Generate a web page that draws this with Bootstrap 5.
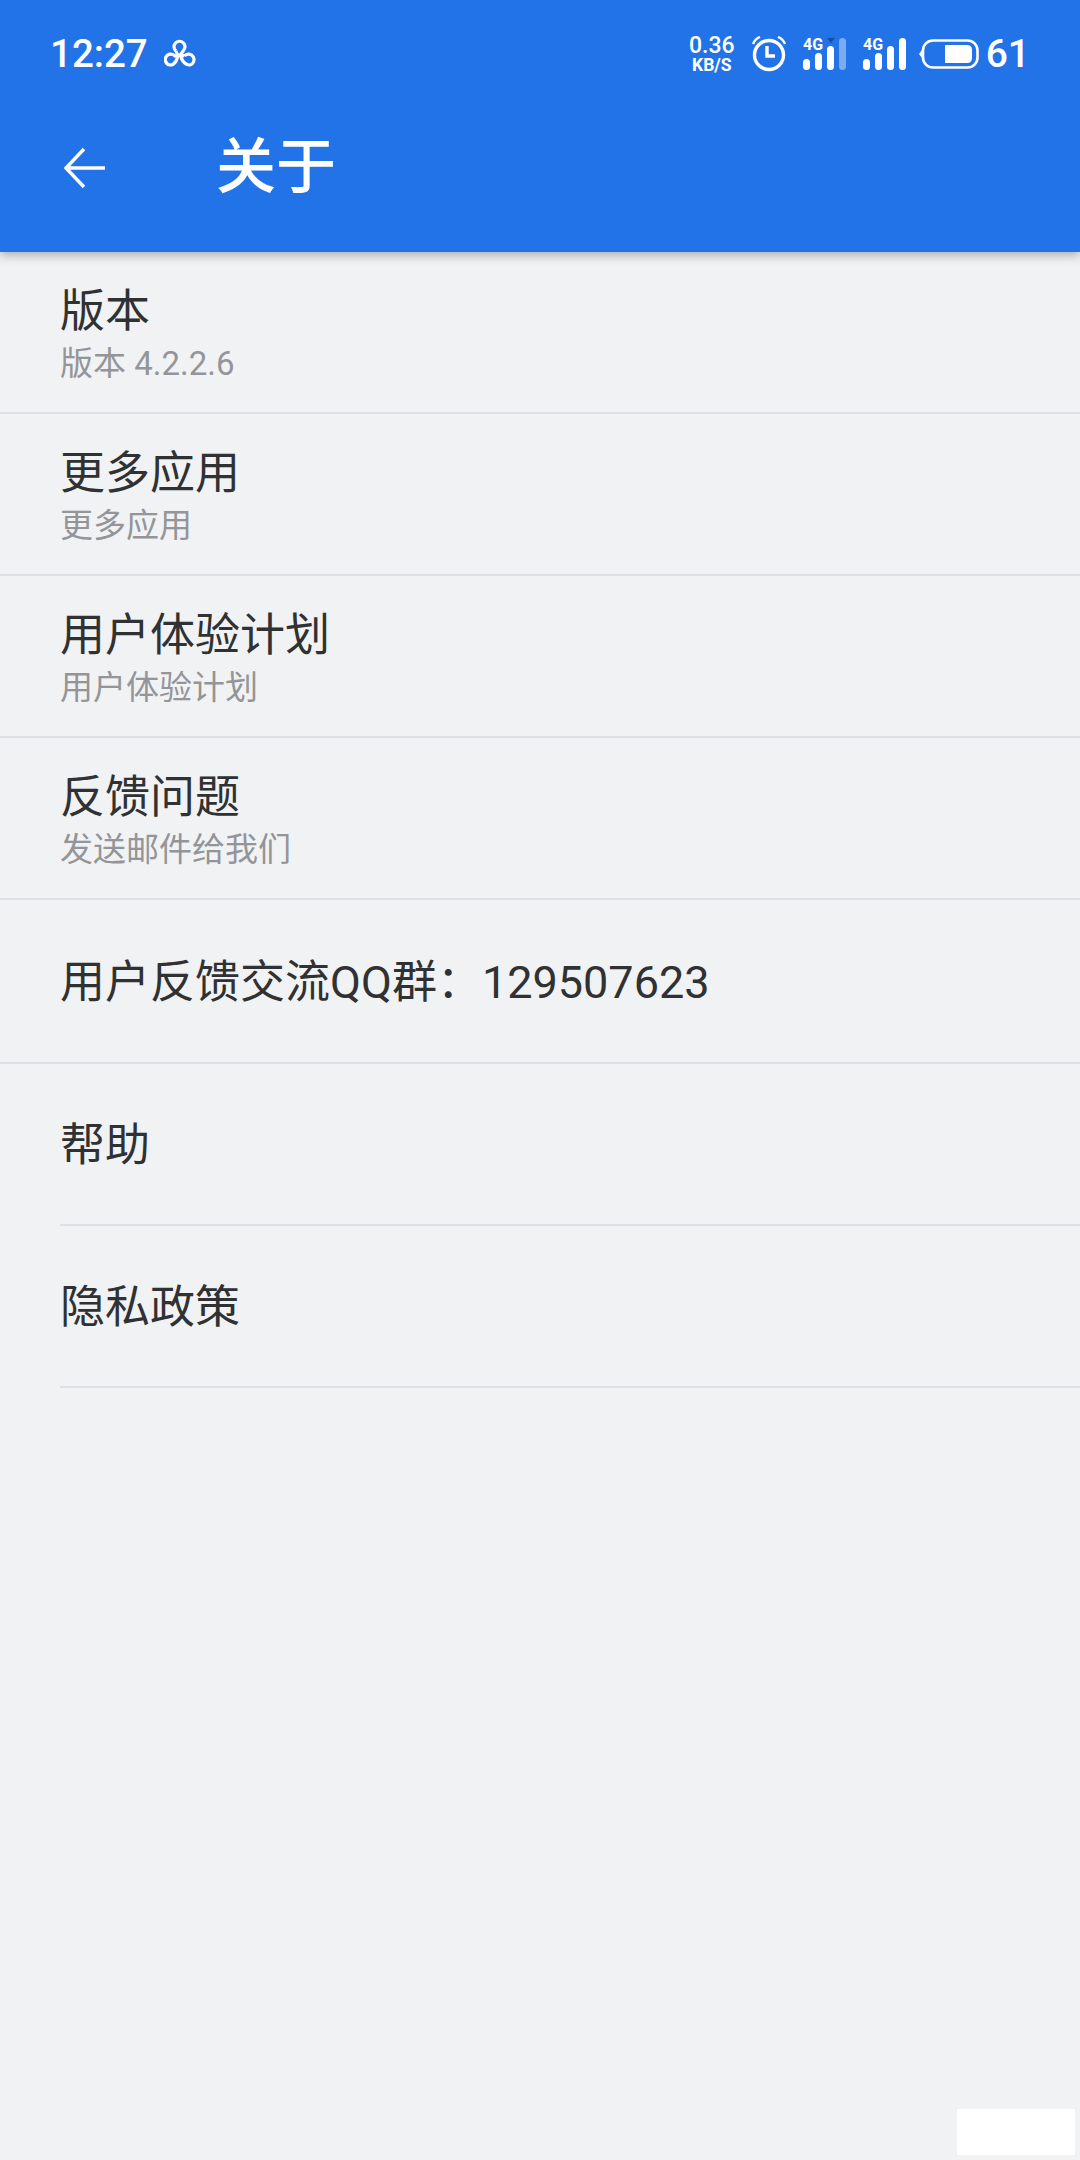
<!DOCTYPE html>
<html lang="zh-CN">
<head>
    <meta charset="UTF-8">
    <meta name="viewport" content="width=device-width, initial-scale=1.0">
    <title>关于</title>
    <link href="https://cdn.jsdelivr.net/npm/bootstrap@5.3.0/dist/css/bootstrap.min.css" rel="stylesheet">
    <style>
        body {
            background-color: #f1f2f4;
            font-family: Roboto, "Noto Sans CJK SC", sans-serif;
            height: 2160px;
            overflow: hidden;
        }
        .app-top {
            background-color: #2373e8;
            color: #fff;
            height: 252px;
            box-shadow: 0 3px 10px rgba(0, 0, 0, .3);
        }
        .status-row {
            height: 108px;
            padding: 0 50px 0 50px;
        }
        .clock-text {
            font-size: 38.5px;
            font-weight: 500;
            line-height: 1;
        }
        .speed-box {
            font-weight: 700;
            line-height: 1;
            text-align: center;
        }
        .speed-top { font-size: 23px; font-weight: 500; }
        .speed-unit { font-size: 17.5px; }
        .batt-gap { margin-left: 12px; }
        .batt-num {
            font-size: 39px;
            font-weight: 500;
            line-height: 1;
            margin-left: 7px;
        }
        .title-row {
            height: 120px;
            padding-left: 63px;
        }
        .page-name {
            font-size: 60px;
            font-weight: 500;
            line-height: 1;
            margin-left: 110px;
        }
        .about-item {
            height: 162px;
            padding-left: 60px;
            padding-top: 4px;
            border-bottom: 2px solid #dfe0e3;
        }
        .about-item.tall-item {
            height: 164px;
        }
        .about-item.inset {
            margin-left: 60px;
            padding-left: 0;
        }
        .item-name {
            color: #303133;
            font-size: 45px;
            line-height: 60px;
        }
        .item-desc {
            color: #939598;
            font-size: 33px;
            line-height: 44px;
        }
        .corner-patch {
            position: absolute;
            left: 957px;
            top: 2109px;
            width: 118px;
            height: 46px;
            background-color: #fff;
        }
    </style>
</head>
<body>
    <div class="app-top position-relative">
        <div class="status-row d-flex align-items-center justify-content-between">
            <div class="d-flex align-items-center">
                <span class="clock-text">12:27</span>
                <svg class="ms-3" width="34" height="30" viewBox="0 0 34 30" fill="none" stroke="#fff" stroke-width="3.2">
                    <path d="M12 12 A5.5 5.5 0 1 1 19.5 11.5 L17 15 C16 19 20 26 26 26 A5.5 5.5 0 1 0 20.5 17"/>
                    <path d="M12 12 L13.5 16 C14 20 11 26 6 26 A5.5 5.5 0 1 1 11 17 C14 16 18 16 20.5 17"/>
                </svg>
            </div>
            <div class="d-flex align-items-center">
                <div class="speed-box">
                    <div class="speed-top">0.36</div>
                    <div class="speed-unit">KB/S</div>
                </div>
                <svg class="ms-3" width="36" height="36" viewBox="0 0 36 36" fill="none" stroke="#fff">
                    <circle cx="18" cy="19" r="14.5" stroke-width="3.4"/>
                    <path d="M16 10 V20 H24" stroke-width="3.4"/>
                    <path d="M2 8 Q4 3 9 1 M34 8 Q32 3 27 1" stroke-width="2.4"/>
                </svg>
                <svg class="ms-3" width="44" height="40" viewBox="0 -4 44 40">
                    <text x="0" y="12" fill="#fff" font-family="Roboto" font-size="16" font-weight="700">4G</text>
                    <path d="M24 0 H32 L28 5 Z" fill="#1a4f9e"/>
                    <rect x="0" y="21" width="7" height="11" rx="3.5" fill="#fff"/>
                    <rect x="12" y="15" width="7" height="17" rx="3.5" fill="#fff"/>
                    <rect x="24" y="8" width="7" height="24" rx="3.5" fill="#fff"/>
                    <rect x="36" y="0" width="7" height="32" rx="3.5" fill="#fff" fill-opacity=".4"/>
                </svg>
                <svg class="ms-3" width="44" height="40" viewBox="0 -4 44 40">
                    <text x="0" y="12" fill="#fff" font-family="Roboto" font-size="16" font-weight="700">4G</text>
                    <rect x="0" y="21" width="7" height="11" rx="3.5" fill="#fff"/>
                    <rect x="12" y="15" width="7" height="17" rx="3.5" fill="#fff"/>
                    <rect x="24" y="8" width="7" height="24" rx="3.5" fill="#fff"/>
                    <rect x="36" y="0" width="7" height="32" rx="3.5" fill="#fff"/>
                </svg>
                <svg class="batt-gap" width="60" height="30" viewBox="0 0 60 30">
                    <path d="M0 15 L3 11 V19 Z" fill="#fff"/>
                    <rect x="4" y="1.5" width="54.5" height="27" rx="10" fill="none" stroke="#fff" stroke-width="2.6"/>
                    <path d="M26 6 H48 Q53 6 53 11 V19 Q53 24 48 24 H26 Z" fill="#fff"/>
                </svg>
                <span class="batt-num">61</span>
            </div>
        </div>
        <div class="title-row d-flex align-items-center">
            <svg width="43" height="42" viewBox="0 0 43 42" fill="none" stroke="#fff" stroke-width="3.4">
                <path d="M42 21 H3 M21 2 L3 21 L21 40"/>
            </svg>
            <div class="page-name">关于</div>
        </div>
    </div>

    <div>
        <div class="about-item d-flex flex-column justify-content-center">
            <div class="item-name">版本</div>
            <div class="item-desc">版本 4.2.2.6</div>
        </div>
        <div class="about-item d-flex flex-column justify-content-center">
            <div class="item-name">更多应用</div>
            <div class="item-desc">更多应用</div>
        </div>
        <div class="about-item d-flex flex-column justify-content-center">
            <div class="item-name">用户体验计划</div>
            <div class="item-desc">用户体验计划</div>
        </div>
        <div class="about-item d-flex flex-column justify-content-center">
            <div class="item-name">反馈问题</div>
            <div class="item-desc">发送邮件给我们</div>
        </div>
        <div class="about-item tall-item d-flex flex-column justify-content-center">
            <div class="item-name">用户反馈交流QQ群：129507623</div>
        </div>
        <div class="about-item inset d-flex flex-column justify-content-center">
            <div class="item-name">帮助</div>
        </div>
        <div class="about-item inset d-flex flex-column justify-content-center">
            <div class="item-name">隐私政策</div>
        </div>
    </div>

    <div class="corner-patch"></div>

    <script src="https://cdn.jsdelivr.net/npm/bootstrap@5.3.0/dist/js/bootstrap.bundle.min.js"></script>
</body>
</html>
